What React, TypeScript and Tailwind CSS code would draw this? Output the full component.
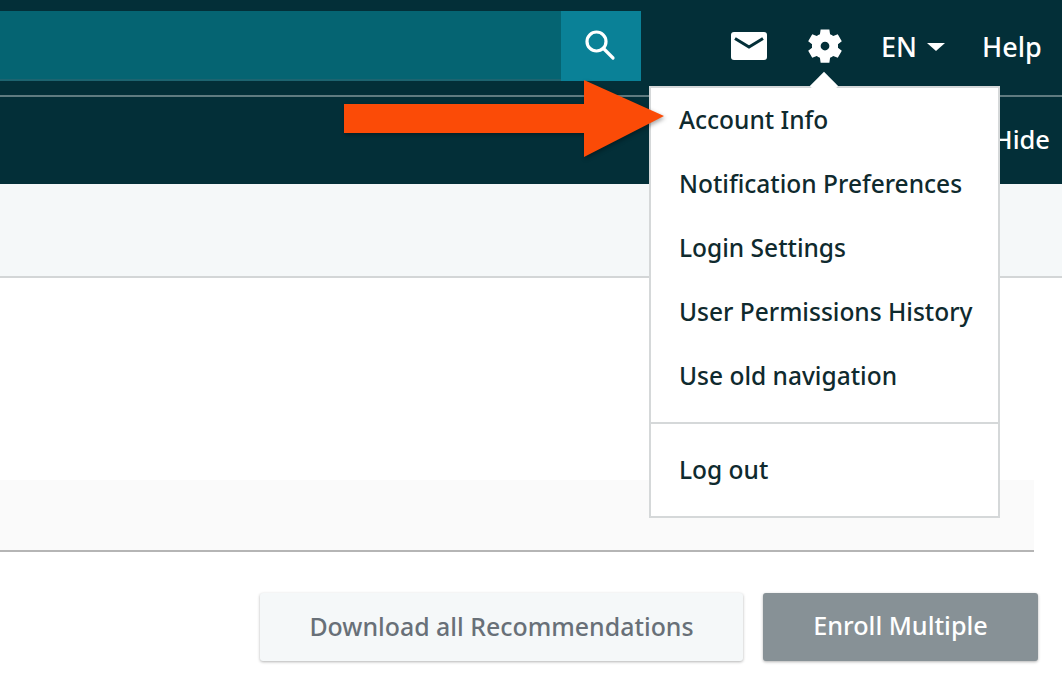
const menuItems = ["Account Info", "Notification Preferences", "Login Settings", "User Permissions History", "Use old navigation"];

const App = () => {
  return (
    <div className="relative h-[694px] w-[1062px] overflow-hidden bg-white font-['Noto_Sans',sans-serif]">
      {/* top bar */}
      <header className="flex h-[95px] items-center bg-[#032f38] pb-[3px] text-white">
        <div className="flex h-[70px] w-[641px] bg-[#056472]">
          <div className="flex-1 border-b-2 border-[#1d6470]" />
          <button className="flex w-[80px] items-center justify-center bg-[#0a8197] pb-[2px] pr-[3px]">
            <svg width="32" height="32" viewBox="0 0 32 32" fill="none" stroke="#fff" strokeWidth="3.2" strokeLinecap="round">
              <circle cx="12.500" cy="12.500" r="9.500" />
              <path d="M19.500 19.500 29 29" />
            </svg>
          </button>
        </div>
        <div className="ml-[90px] flex items-center">
          <svg width="36" height="28" viewBox="0 0 36 28">
            <rect width="36" height="28" rx="3" fill="#fff" />
            <path d="M4 6.500 18 15 32 6.500" fill="none" stroke="#032f38" strokeWidth="3" />
          </svg>
          <svg className="ml-[37px] mb-[1px]" width="42" height="42" viewBox="0 0 24 24" fill="#fff">
            <path d="M19.400 13a7.800 7.800 0 0 0 0-2l2.200-1.700-2.300-4-2.600 1a7.600 7.600 0 0 0-1.800-1L14.500 2.500h-5L9.100 5.300a7.600 7.600 0 0 0-1.800 1l-2.600-1-2.300 4L4.600 11a7.800 7.800 0 0 0 0 2l-2.200 1.700 2.300 4 2.600-1a7.600 7.600 0 0 0 1.800 1l.4 2.800h5l.4-2.800a7.600 7.600 0 0 0 1.800-1l2.600 1 2.300-4zM12 14.500a2.500 2.500 0 1 1 0-5 2.500 2.500 0 0 1 0 5z" />
          </svg>
          <span className="ml-[35px] text-[27px] font-medium leading-none">EN</span>
          <span className="ml-[10px] mt-[1px] h-0 w-0 border-x-[9px] border-t-[8px] border-x-transparent border-t-white" />
          <span className="ml-[37px] text-[27px] font-medium leading-none">Help</span>
        </div>
      </header>

      {/* sub bar */}
      <div className="flex h-[89px] items-start justify-end border-t-2 border-[#5f7b80] bg-[#032f38] pr-[12px] pt-[24px] text-white">
        <span className="text-[25.5px] font-medium leading-[36px]">Hide</span>
      </div>

      {/* page heading strip */}
      <div className="h-[94px] border-b-2 border-[#d3d6d7] bg-[#f5f8f9]" />

      {/* table */}
      <div className="mt-[202px] h-[72px] w-[1034px] border-b-2 border-[#b5b5b5] bg-[#fafafa]" />

      {/* actions */}
      <div className="mt-[41px] flex justify-end gap-[20px] pr-[24px]">
        <button className="h-[68px] w-[483px] rounded-[3px] bg-[#f5f8f9] pb-[1px] text-[24.9px] font-medium text-[#687078] shadow-[0_1px_3px_rgba(0,0,0,0.3)]">
          Download all Recommendations
        </button>
        <button className="h-[68px] w-[275px] rounded-[3px] bg-[#879196] pb-[3px] text-[25.2px] font-medium text-white shadow-[0_1px_3px_rgba(0,0,0,0.3)]">
          Enroll Multiple
        </button>
      </div>

      {/* settings menu */}
      <div className="absolute left-[649px] top-[86px] w-[351px] border-2 border-[#d5d8d9] bg-white text-[24.5px] font-medium text-[#0f2a2e]">
        <div className="absolute left-[163px] top-[-12px] h-[20px] w-[20px] rotate-45 bg-white" />
        <ul className="relative pb-[14px]">
          {menuItems.map((item) => (
            <li key={item} className="flex h-[64px] items-center pl-[28px]">{item}</li>
          ))}
        </ul>
        <div className="flex h-[94px] items-center border-t-2 border-[#d5d8d9] pl-[28px]">Log out</div>
      </div>

      {/* callout arrow */}
      <svg className="absolute left-[344px] top-[80px] drop-shadow-[1px_2px_2px_rgba(0,0,0,0.35)]" width="322" height="78" viewBox="0 0 322 78">
        <path d="M0 24H240V0L320 36 240 77V53H0z" fill="#fb4b07" />
      </svg>
    </div>
  );
};

export default App;
